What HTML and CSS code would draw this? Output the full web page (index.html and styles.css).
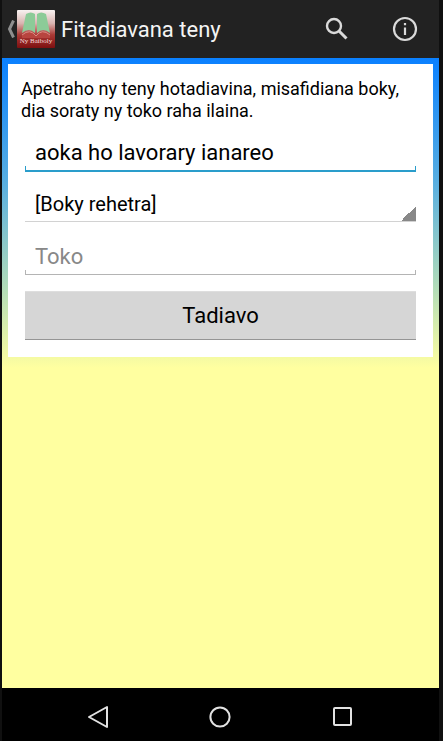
FILE: index.html
```html
<!DOCTYPE html>
<html lang="mg">
  <head>
    <meta charset="UTF-8" />
    <meta name="viewport" content="width=device-width, initial-scale=1.0" />
    <title>Fitadiavana teny</title>
    <link rel="stylesheet" href="styles.css">
  </head>
  <body>
    <header class="action-bar">
      <button class="up-btn" type="button" aria-label="Hiverina">
        <svg class="chevron" width="9" height="18" viewBox="0 0 9 18">
          <path d="M7.5 0.5 L3.5 9 L7.5 17.5" fill="none" stroke="#8e8e8e" stroke-width="3" />
        </svg>
        <svg class="logo" width="38" height="38" viewBox="0 0 38 38">
          <defs>
            <linearGradient id="cover" x1="0" y1="0" x2="0" y2="1">
              <stop offset="0" stop-color="#f8f2f1" />
              <stop offset="0.35" stop-color="#d9b5b1" />
              <stop offset="0.65" stop-color="#ab3a36" />
              <stop offset="1" stop-color="#7d1010" />
            </linearGradient>
          </defs>
          <rect width="38" height="38" rx="1" fill="url(#cover)" />
          <path d="M5 25 Q13 18 19 26 Q25 18 33 25 L33 28 L5 28 Z" fill="#b8453f" />
          <path d="M5 25 Q13 18 19 26 Q25 18 33 25" fill="none" stroke="#dc8a82" />
          <path d="M9 4 Q14 1 18 4 L18 23 Q12 17 5 23 Z" fill="#8ccb98" />
          <path d="M29 4 Q24 1 20 4 L20 23 Q26 17 33 23 Z" fill="#8ccb98" />
          <text class="logo-text" x="19" y="33" text-anchor="middle">Ny Baiboly</text>
        </svg>
      </button>
      <h1 class="title">Fitadiavana teny</h1>
      <button class="icon-btn" type="button" aria-label="Tadiavo">
        <svg width="28" height="28" viewBox="0 0 28 28" fill="none" stroke="#dadada">
          <circle cx="11" cy="11" r="7" stroke-width="2.4" />
          <path d="M16 16 L23.5 23.5" stroke-width="3" />
        </svg>
      </button>
      <button class="icon-btn" type="button" aria-label="Mombamomba">
        <svg width="28" height="28" viewBox="0 0 28 28" fill="none" stroke="#dadada">
          <circle cx="14" cy="14" r="11" stroke-width="2.2" />
          <path d="M14 8 V10.3 M14 12.5 V20" stroke-width="2.2" />
        </svg>
      </button>
    </header>

    <main class="content">
      <form class="card">
        <p class="hint">Apetraho ny teny hotadiavina, misafidiana boky, dia soraty ny toko raha ilaina.</p>
        <div class="fields">
          <input class="field active" type="text" name="teny" value="aoka ho lavorary ianareo" aria-label="Teny" />
          <select class="spinner" name="boky" aria-label="Boky">
            <option>[Boky rehetra]</option>
          </select>
          <input class="field" type="text" name="toko" placeholder="Toko" aria-label="Toko" />
          <button class="submit-btn" type="button">Tadiavo</button>
        </div>
      </form>
    </main>

    <nav class="nav-bar">
      <button class="nav-btn" type="button" aria-label="Back">
        <svg width="24" height="24" viewBox="0 0 24 24">
          <path d="M21 2 V22 L3 12 Z" />
        </svg>
      </button>
      <button class="nav-btn" type="button" aria-label="Home">
        <svg width="24" height="24" viewBox="0 0 24 24">
          <circle cx="12" cy="12" r="9.6" />
        </svg>
      </button>
      <button class="nav-btn" type="button" aria-label="Recent">
        <svg width="24" height="24" viewBox="0 0 24 24">
          <rect x="3" y="3" width="17" height="17" rx="1" />
        </svg>
      </button>
    </nav>
  </body>
</html>
```

FILE: styles.css
```css
* {
  box-sizing: border-box;
}

body {
  display: flex;
  flex-direction: column;
  min-height: 100vh;
  margin: 0;
  padding: 0 4px 0 2px;
  background-color: #101010;
  font-family: Roboto, "Liberation Sans", sans-serif;
  color: #000;
}

button {
  border: none;
  padding: 0;
  background: none;
  font-family: inherit;
  cursor: pointer;
}

svg {
  display: block;
}

.action-bar {
  display: flex;
  align-items: center;
  height: 58px;
  padding-left: 4px;
  background-color: #222;
}

.up-btn {
  display: flex;
  align-items: center;
  gap: 2px;
}

.logo-text {
  font-family: "Liberation Serif", serif;
  font-size: 7px;
  fill: #f6dedb;
}

.title {
  flex: 1;
  margin: 0 0 0 6px;
  font-size: 22px;
  font-weight: 400;
  color: #f4f4f4;
}

.icon-btn {
  display: flex;
  align-items: center;
  justify-content: center;
  width: 68px;
  height: 56px;
}

.content {
  flex: 1;
  padding: 6px;
  background: linear-gradient(#0a80ff, #5aafe0 126px, #b2dcb8 230px, #ffffa0 310px);
}

.card {
  padding: 14px 17px 17px;
  background-color: #fff;
}

.hint {
  margin: 0 -4px;
  font-size: 18px;
  line-height: 22px;
}

.fields {
  display: flex;
  flex-direction: column;
}

.field,
.spinner {
  width: 100%;
  height: 50px;
  border: none;
  border-radius: 0;
  outline: none;
  padding: 0 10px;
  font-family: inherit;
  color: #000;
}

/* underline with a short tick at both ends */
.field {
  --line: #b4b4b4;
  height: 53px;
  padding-top: 16px;
  font-size: 22px;
  background:
    linear-gradient(var(--line), var(--line)) left bottom / 100% 1px no-repeat,
    linear-gradient(var(--line), var(--line)) left bottom / 1px 5px no-repeat,
    linear-gradient(var(--line), var(--line)) right bottom / 1px 5px no-repeat;
}

.field.active {
  --line: #2a9dcb;
  height: 50px;
  padding-top: 12px;
  border-bottom: 1px solid var(--line);
}

.field::placeholder {
  color: #888;
  opacity: 1;
}

.spinner {
  appearance: none;
  padding-top: 14px;
  font-size: 20px;
  border-bottom: 1px solid #d2d2d2;
  background: linear-gradient(135deg, transparent 50%, #888 50%) right bottom / 15px 15px no-repeat;
}

.submit-btn {
  height: 49px;
  margin-top: 16px;
  border-top: 1px solid #dedede;
  border-bottom: 1px solid #959595;
  background-color: #d6d6d6;
  font-size: 22px;
  color: #000;
}

.nav-bar {
  display: flex;
  justify-content: center;
  height: 53px;
  background-color: #000;
}

.nav-btn {
  display: flex;
  align-items: center;
  justify-content: center;
  width: 28%;
  padding-top: 4px;
}

.nav-btn svg {
  fill: none;
  stroke: #e2e2e2;
  stroke-width: 2;
  stroke-linejoin: round;
}
```
